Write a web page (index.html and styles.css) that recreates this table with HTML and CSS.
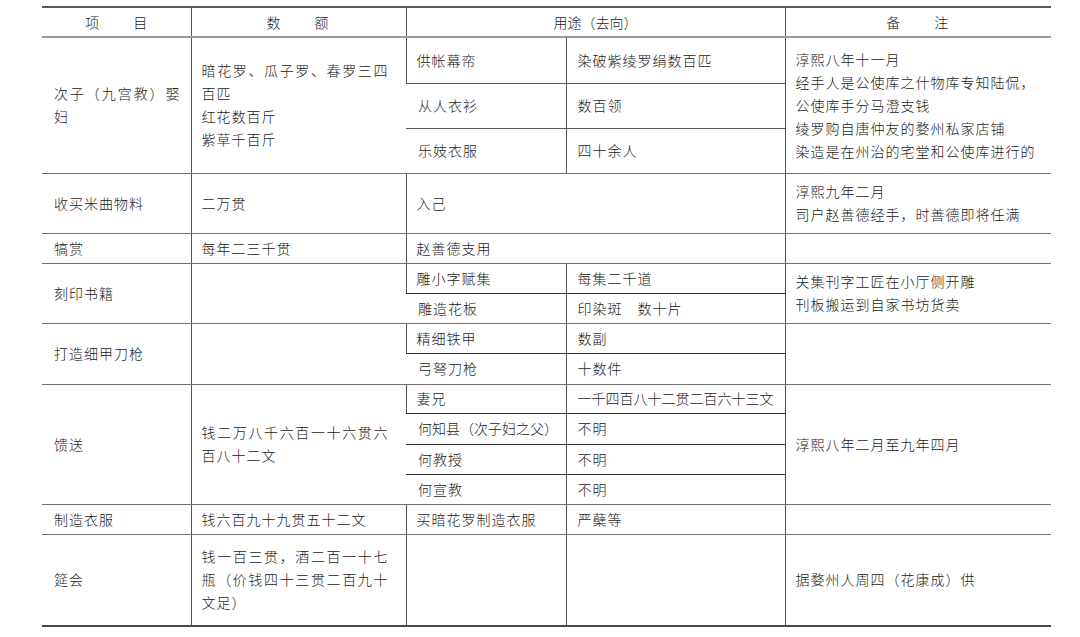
FILE: index.html
```html
<!DOCTYPE html>
<html lang="zh-CN">
<head>
<meta charset="utf-8">
<title>表</title>
<link rel="stylesheet" href="styles.css">
</head>
<body>
<table class="ledger">
  <colgroup>
    <col class="c1"><col class="c2"><col class="c3a"><col class="c3b"><col class="c4">
  </colgroup>
  <thead>
    <tr class="hd">
      <th class="sp">项　　目</th>
      <th class="sp">数　　额</th>
      <th colspan="2" class="tight">用途（去向）</th>
      <th class="sp">备　　注</th>
    </tr>
  </thead>
  <tbody>
    <tr class="r46">
      <td rowspan="3" class="jt">次子（九宫教）娶妇</td>
      <td rowspan="3" class="jt">暗花罗、瓜子罗、春罗三四百匹<br>红花数百斤<br>紫草千百斤</td>
      <td class="sub">供帐幕帟</td>
      <td class="sub2">染破紫绫罗绢数百匹</td>
      <td rowspan="3" class="note">淳熙八年十一月<br>经手人是公使库之什物库专知陆侃，<br>公使库手分马澄支钱<br>绫罗购自唐仲友的婺州私家店铺<br>染造是在州治的宅堂和公使库进行的</td>
    </tr>
    <tr class="r45">
      <td class="sub">从人衣衫</td>
      <td class="sub2">数百领</td>
    </tr>
    <tr class="r45 grp-end">
      <td class="sub">乐妓衣服</td>
      <td class="sub2">四十余人</td>
    </tr>
    <tr class="r60 grp-end">
      <td>收买米曲物料</td>
      <td>二万贯</td>
      <td colspan="2">入己</td>
      <td class="note">淳熙九年二月<br>司户赵善德经手，时善德即将任满</td>
    </tr>
    <tr class="r30 grp-end">
      <td>犒赏</td>
      <td>每年二三千贯</td>
      <td colspan="2">赵善德支用</td>
      <td class="note"></td>
    </tr>
    <tr class="r30">
      <td rowspan="2">刻印书籍</td>
      <td rowspan="2"></td>
      <td class="sub dark">雕小字赋集</td>
      <td class="sub2 dark">每集二千道</td>
      <td rowspan="2" class="note">关集刊字工匠在小厅侧开雕<br>刊板搬运到自家书坊货卖</td>
    </tr>
    <tr class="r30 grp-end">
      <td class="sub">雕造花板</td>
      <td class="sub2">印染斑　数十片</td>
    </tr>
    <tr class="r30">
      <td rowspan="2">打造细甲刀枪</td>
      <td rowspan="2"></td>
      <td class="sub dark">精细铁甲</td>
      <td class="sub2 dark">数副</td>
      <td rowspan="2" class="note"></td>
    </tr>
    <tr class="r31 grp-end">
      <td class="sub">弓弩刀枪</td>
      <td class="sub2">十数件</td>
    </tr>
    <tr class="r29">
      <td rowspan="4">馈送</td>
      <td rowspan="4" class="jt">钱二万八千六百一十六贯六百八十二文</td>
      <td class="sub dark">妻兄</td>
      <td class="sub2 dark nw">一千四百八十二贯二百六十三文</td>
      <td rowspan="4" class="note">淳熙八年二月至九年四月</td>
    </tr>
    <tr class="r31">
      <td class="sub dark nw">何知县（次子妇之父）</td>
      <td class="sub2 dark">不明</td>
    </tr>
    <tr class="r30">
      <td class="sub dark">何教授</td>
      <td class="sub2 dark">不明</td>
    </tr>
    <tr class="r30 grp-end">
      <td class="sub">何宣教</td>
      <td class="sub2">不明</td>
    </tr>
    <tr class="r30 grp-end">
      <td>制造衣服</td>
      <td>钱六百九十九贯五十二文</td>
      <td class="sub">买暗花罗制造衣服</td>
      <td class="sub2">严蘗等</td>
      <td class="note"></td>
    </tr>
    <tr class="r92 last">
      <td>筵会</td>
      <td class="jt">钱一百三贯，酒二百一十七瓶（价钱四十三贯二百九十文足）</td>
      <td class="sub"></td>
      <td class="sub2"></td>
      <td class="note">据婺州人周四（花康成）供</td>
    </tr>
  </tbody>
</table>
</body>
</html>
```

FILE: styles.css
```css
html, body {
  margin: 0;
  padding: 0;
  background: #ffffff;
}

body {
  padding: 6px 0 0 42px;
  font-family: "Noto Sans CJK SC", "Noto Sans CJK JP", sans-serif;
  font-weight: 300;
  color: #222222;
}

.ledger {
  border-collapse: collapse;
  table-layout: fixed;
  width: 1009px;
  font-size: 14px;
  letter-spacing: 1px;
  line-height: 23px;
  border-top: 2px solid #5a5a5a;
}

.c1 { width: 149px; }
.c2 { width: 215px; }
.c3a { width: 160px; }
.c3b { width: 219px; }
.c4 { width: 266px; }

.ledger th,
.ledger td {
  padding: 0 10px;
  vertical-align: middle;
  text-align: left;
  border-left: 1px solid #555555;
  overflow: hidden;
}

.ledger th:first-child,
.ledger td:first-child {
  border-left: none;
  padding-left: 12px;
}

.ledger th {
  font-weight: 300;
  text-align: center;
  height: 28px;
  border-bottom: 2px solid #9a9a9a;
}

.ledger th.sp {
  letter-spacing: 2px;
}

.ledger th.tight {
  letter-spacing: 0;
}

.ledger td.jt {
  text-align: justify;
  text-justify: inter-character;
}

.ledger td:nth-child(2).jt,
.ledger tr td.jt + td.jt {
  padding-right: 17px;
}

.ledger td.note {
  padding-left: 10px;
  padding-right: 4px;
}

.ledger td.sub2 {
  padding-left: 11px;
  padding-right: 4px;
}

.ledger td.nw {
  white-space: nowrap;
  letter-spacing: 0;
}

.ledger tr.grp-end > td {
  border-bottom: 1px solid #6f6f6f;
}

.ledger td.sub,
.ledger td.sub2 {
  border-bottom: 1px solid #5a5a5a;
}

.ledger td.dark {
  border-bottom: 1px solid #333333;
}

.ledger tr.last > td {
  border-bottom: 2px solid #4a4a4a;
}

.ledger td[rowspan] {
  border-bottom: 1px solid #6f6f6f;
}

.r29 { height: 29px; }
.r30 { height: 30px; }
.r31 { height: 31px; }
.r45 { height: 45px; }
.r46 { height: 46px; }
.r60 { height: 60px; }
.r92 { height: 92px; }
```
